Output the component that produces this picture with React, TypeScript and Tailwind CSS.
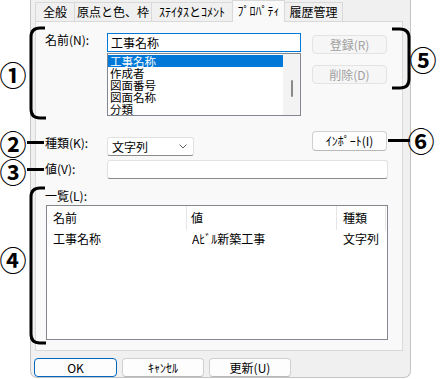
import React from "react";

const tabs = [
  { label: "全般", w: "w-[40px]" },
  { label: "原点と色、枠", w: "w-[78px]" },
  { label: "ｽﾃｲﾀｽとｺﾒﾝﾄ", w: "w-[82px]" },
  { label: "ﾌﾟﾛﾊﾟﾃｨ", w: "w-[53px]", active: true },
  { label: "履歴管理", w: "w-[59px]" },
];

const nameItems = ["工事名称", "作成者", "図面番号", "図面名称", "分類"];

const Btn = ({
  children,
  disabled,
  primary,
  className = "",
}: {
  children: React.ReactNode;
  disabled?: boolean;
  primary?: boolean;
  className?: string;
}) => (
  <div
    className={`flex items-center justify-center rounded-[4px] border text-[12px] ${
      disabled
        ? "border-[#e3e3e3] bg-[#f6f6f6] text-[#a0a0a0]"
        : primary
        ? "border-[#0067c0] bg-[#fdfdfd] text-black"
        : "border-[#d0d0d0] border-b-[#b8b8b8] bg-[#fdfdfd] text-black"
    } ${className}`}
  >
    {children}
  </div>
);

// annotation overlay: circled numbers + brackets drawn on the screenshot
const Annotations = () => (
  <svg
    className="pointer-events-none absolute left-0 top-0"
    width={440}
    height={379}
    viewBox="0 0 440 379"
  >
    <g fill="none" stroke="#000" strokeWidth={3} strokeLinecap="butt">
      <path d="M45 28 H40 Q31 28 31 37 V109 Q31 118 40 118 H46" />
      <path d="M45 188 H40 Q31 188 31 197 V334 Q31 343 40 343 H46" />
      <path d="M392 29 H400 Q409 29 409 38 V79 Q409 88 400 88 H392" />
      <path d="M27 142.5 H44" />
      <path d="M27 169.5 H44" />
      <path d="M388 140.5 H410" />
    </g>
    <g
      fontFamily='"Noto Sans CJK JP", sans-serif'
      fontSize={27}
      fontWeight={700}
      textAnchor="middle"
      dominantBaseline="central"
      fill="#000"
    >
      <text x={13} y={74}>①</text>
      <text x={13} y={143}>②</text>
      <text x={13} y={171}>③</text>
      <text x={13} y={259}>④</text>
      <text x={423} y={59}>⑤</text>
      <text x={421} y={140}>⑥</text>
    </g>
  </svg>
);

const App = () => {
  return (
    <div
      className="relative h-[379px] w-[440px] overflow-hidden bg-white text-[12px] text-black"
      style={{ fontFamily: '"Noto Sans CJK JP", "Liberation Sans", sans-serif' }}
    >
      <div className="ml-[30px] flex h-[378px] w-[381px] flex-col rounded-b-[7px] border-x border-b border-[#c4c4c4] bg-[#f0f0f0]">
        {/* Tabs */}
        <div className="relative z-10 flex h-[22px] items-end pl-[4px]">
          {tabs.map((t) => (
            <div
              key={t.label}
              className={`flex items-center justify-center whitespace-nowrap border-x border-t border-[#d9d9d9] ${t.w} ${
                t.active
                  ? "h-[22px] bg-[#f9f9f9] pb-[2px]"
                  : "h-[20px] border-b bg-[#f0f0f0]"
              } -ml-px first:ml-0`}
            >
              {t.label}
            </div>
          ))}
        </div>

        {/* Tab page */}
        <div className="-mt-px ml-[4px] mr-[7px] h-[330px] border border-[#d9d9d9] bg-[#f9f9f9] pl-[9px] pt-[11px]">
          {/* Name row */}
          <div className="flex">
            <div className="w-[62px] leading-[14px]">名前(N):</div>
            <div className="flex w-[194px] flex-col">
              <div className="h-[19px] border border-[#0078d7] bg-white px-[3px] leading-[17px]">
                工事名称
              </div>
              <div className="mt-px flex h-[63px] border border-[#828790] bg-white">
                <div className="flex-1 pt-px text-[11.5px] leading-[12px]">
                  {nameItems.map((it, i) => (
                    <div
                      key={it}
                      className={`h-[12px] px-[2px] ${
                        i === 0 ? "bg-[#0078d7] text-white" : ""
                      }`}
                    >
                      {it}
                    </div>
                  ))}
                </div>
                <div className="flex w-[17px] justify-center bg-[#f3f3f3]">
                  <div className="mt-[26px] h-[17px] w-[2px] rounded bg-[#8a8a8a]" />
                </div>
              </div>
            </div>
            <div className="ml-[11px] flex flex-col gap-[11px] pt-[2px]">
              <Btn disabled className="h-[19px] w-[75px]">
                登録(R)
              </Btn>
              <Btn disabled className="h-[19px] w-[75px]">
                削除(D)
              </Btn>
            </div>
          </div>

          {/* Type row */}
          <div className="mt-[15px] flex">
            <div className="w-[62px] pt-[5px] leading-[14px]">種類(K):</div>
            <div className="w-[194px] pt-[6px]">
              <div className="flex h-[19px] w-[87px] items-center justify-between rounded-[3px] border border-[#e2e2e2] border-b-[#8a8a8a] bg-white pl-[4px] pr-[6px]">
                <span>文字列</span>
                <svg width="8" height="5" viewBox="0 0 8 5">
                  <path d="M0.5 0.5 L4 4 L7.5 0.5" fill="none" stroke="#606060" strokeWidth="1" />
                </svg>
              </div>
            </div>
            <div className="ml-[11px]">
              <Btn className="h-[20px] w-[75px]">ｲﾝﾎﾟｰﾄ(I)</Btn>
            </div>
          </div>

          {/* Value row */}
          <div className="mt-[4px] flex">
            <div className="w-[62px] leading-[18px]">値(V):</div>
            <div className="h-[19px] w-[281px] rounded-[3px] border border-[#e2e2e2] border-b-[#8a8a8a] bg-white" />
          </div>

          {/* List */}
          <div className="mt-[10px] leading-[14px]">一覧(L):</div>
          <div className="ml-px mt-[2px] h-[135px] w-[342px] border border-[#828790] bg-white">
            <div className="flex h-[24px] items-center">
              <div className="flex h-full w-[140px] items-center border-r border-[#e5e5e5] pl-[6px]">
                名前
              </div>
              <div className="flex h-full w-[150px] items-center border-r border-[#e5e5e5] pl-[4px]">
                値
              </div>
              <div className="flex h-full w-[49px] items-center border-r border-[#e5e5e5] pl-[6px]">
                種類
              </div>
            </div>
            <div className="flex h-[18px] items-center">
              <div className="w-[140px] pl-[6px]">工事名称</div>
              <div className="w-[150px] pl-[5px]">Aﾋﾞﾙ新築工事</div>
              <div className="w-[49px] pl-[6px]">文字列</div>
            </div>
          </div>
        </div>

        {/* Dialog buttons */}
        <div className="mt-[7px] flex gap-[5px] pl-[3px]">
          <Btn primary className="h-[19px] w-[83px]">
            OK
          </Btn>
          <Btn className="h-[19px] w-[82px]">ｷｬﾝｾﾙ</Btn>
          <Btn className="h-[19px] w-[82px]">更新(U)</Btn>
        </div>
      </div>

      <Annotations />
    </div>
  );
};

export default App;
